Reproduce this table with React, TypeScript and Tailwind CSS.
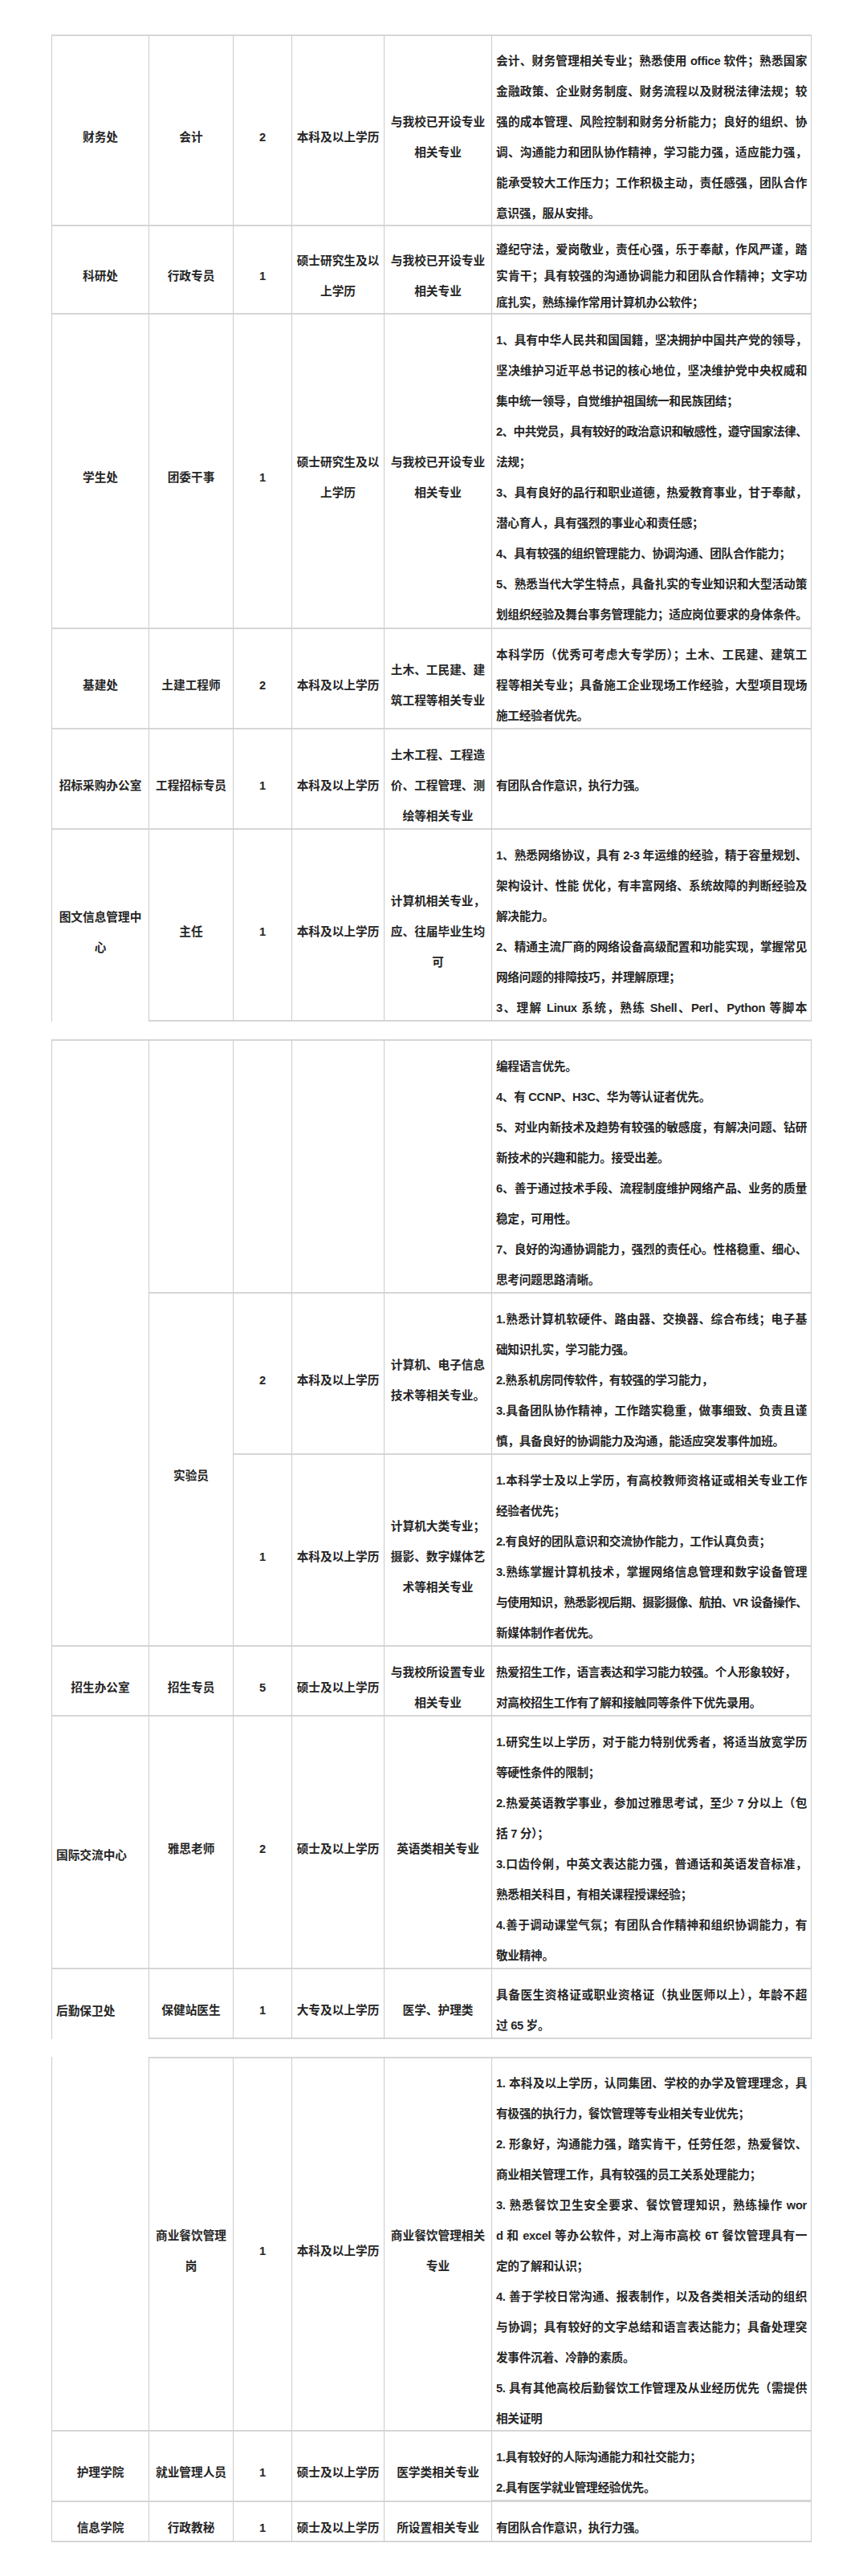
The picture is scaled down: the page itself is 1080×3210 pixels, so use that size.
import React from "react";
import clsx from "clsx";

const FONT = "font-[family-name:'Liberation_Sans','Noto_Sans_CJK_SC',sans-serif]";

type CProps = {
  t?: string[];
  edge?: boolean;
  top?: boolean;
  open?: boolean;
  left?: boolean;
  low?: boolean;
  span?: string;
};

// plain cell (department / post / count / degree / major)
function C({ t = [], edge, top, open, left, low, span }: CProps) {
  return (
    <div
      className={clsx(
        "flex items-center border-r border-[#cccccc] leading-[38px]",
        edge && "border-l",
        top && "border-t-2 border-t-[#d6d6d6]",
        !open && "border-b-2 border-b-[#d6d6d6]",
        left ? "justify-start pl-[5px]" : "justify-center px-1 text-center",
        low ? "pt-[32px]" : "pt-[16px]",
        span
      )}
    >
      <div>
        {t.map((s, i) => (
          <div key={i} className="whitespace-nowrap">
            {s}
          </div>
        ))}
      </div>
    </div>
  );
}

type DProps = {
  p: string[][];
  top?: boolean;
  lh?: string;
  cont?: boolean;
  thick?: boolean;
};

// requirement text, every wrapped line justified like the word doc
function D({ p, top, lh = "leading-[38px]", cont, thick }: DProps) {
  return (
    <div
      className={clsx(
        "flex items-center border-r border-[#cccccc] pl-[5px] pr-[5px] pt-[16px]",
        lh,
        top && "border-t-2 border-t-[#d6d6d6]",
        thick ? "border-b-[3px] border-b-[#d6d6d6]" : "border-b-2 border-b-[#d6d6d6]"
      )}
    >
      <div className="w-full">
        {p.map((para, i) =>
          para.map((s, j) => {
            const last = j === para.length - 1 && !(cont && i === p.length - 1);
            const tight = s.startsWith("~");
            return (
              <div
                key={`${i}-${j}`}
                className={clsx(
                  tight ? "tracking-[-0.8px]" : "tracking-[-0.3px]",
                  last ? "whitespace-nowrap" : "text-justify [text-align-last:justify]"
                )}
              >
                {tight ? s.slice(1) : s}
              </div>
            );
          })
        )}
      </div>
    </div>
  );
}

export default function App() {
  return (
    <div className={clsx("min-h-[3210px] bg-white pl-[64px] pt-[43px] text-[14.67px] font-bold text-[#262626]", FONT)}>
      <div className="flex w-[947px] flex-col gap-[22px]">
        {/* page 1 */}
        <div className="grid grid-cols-[122px_105px_73px_115px_134px_398px] grid-rows-[239px_110px_392px_125px_125px_239px]">
          <C edge top t={["财务处"]} />
          <C top t={["会计"]} />
          <C top t={["2"]} />
          <C top t={["本科及以上学历"]} />
          <C top t={["与我校已开设专业", "相关专业"]} />
          <D
            top
            p={[
              [
                "会计、财务管理相关专业；熟悉使用 office 软件；熟悉国家",
                "金融政策、企业财务制度、财务流程以及财税法律法规；较",
                "强的成本管理、风险控制和财务分析能力；良好的组织、协",
                "调、沟通能力和团队协作精神，学习能力强，适应能力强，",
                "能承受较大工作压力；工作积极主动，责任感强，团队合作",
                "意识强，服从安排。",
              ],
            ]}
          />

          <C edge t={["科研处"]} />
          <C t={["行政专员"]} />
          <C t={["1"]} />
          <C t={["硕士研究生及以", "上学历"]} />
          <C t={["与我校已开设专业", "相关专业"]} />
          <D
            lh="leading-[33px]"
            p={[
              [
                "遵纪守法，爱岗敬业，责任心强，乐于奉献，作风严谨，踏",
                "实肯干；具有较强的沟通协调能力和团队合作精神；文字功",
                "底扎实，熟练操作常用计算机办公软件；",
              ],
            ]}
          />

          <C edge t={["学生处"]} />
          <C t={["团委干事"]} />
          <C t={["1"]} />
          <C t={["硕士研究生及以", "上学历"]} />
          <C t={["与我校已开设专业", "相关专业"]} />
          <D
            p={[
              [
                "1、具有中华人民共和国国籍，坚决拥护中国共产党的领导，",
                "坚决维护习近平总书记的核心地位，坚决维护党中央权威和",
                "集中统一领导，自觉维护祖国统一和民族团结；",
              ],
              ["~2、中共党员，具有较好的政治意识和敏感性，遵守国家法律、", "法规；"],
              ["3、具有良好的品行和职业道德，热爱教育事业，甘于奉献，", "潜心育人，具有强烈的事业心和责任感；"],
              ["4、具有较强的组织管理能力、协调沟通、团队合作能力；"],
              ["5、熟悉当代大学生特点，具备扎实的专业知识和大型活动策", "划组织经验及舞台事务管理能力；适应岗位要求的身体条件。"],
            ]}
          />

          <C edge t={["基建处"]} />
          <C t={["土建工程师"]} />
          <C t={["2"]} />
          <C t={["本科及以上学历"]} />
          <C t={["土木、工民建、建", "筑工程等相关专业"]} />
          <D
            p={[
              [
                "本科学历（优秀可考虑大专学历）；土木、工民建、建筑工",
                "程等相关专业；具备施工企业现场工作经验，大型项目现场",
                "施工经验者优先。",
              ],
            ]}
          />

          <C edge t={["招标采购办公室"]} />
          <C t={["工程招标专员"]} />
          <C t={["1"]} />
          <C t={["本科及以上学历"]} />
          <C t={["土木工程、工程造", "价、工程管理、测", "绘等相关专业"]} />
          <D p={[["有团队合作意识，执行力强。"]]} />

          <C edge open t={["图文信息管理中", "心"]} />
          <C t={["主任"]} />
          <C t={["1"]} />
          <C t={["本科及以上学历"]} />
          <C t={["计算机相关专业，", "应、往届毕业生均", "可"]} />
          <D
            cont
            p={[
              [
                "1、熟悉网络协议，具有 2-3 年运维的经验，精于容量规划、",
                "架构设计、性能 优化，有丰富网络、系统故障的判断经验及",
                "解决能力。",
              ],
              ["2、精通主流厂商的网络设备高级配置和功能实现，掌握常见", "网络问题的排障技巧，并理解原理；"],
              ["3、理解 Linux 系统，熟练 Shell、Perl、Python 等脚本"],
            ]}
          />
        </div>

        {/* page 2 */}
        <div className="grid grid-cols-[122px_105px_73px_115px_134px_398px] grid-rows-[317px_201px_239px_87px_315px_87px]">
          <C edge top span="row-span-3" />
          <C top />
          <C top />
          <C top />
          <C top />
          <D
            top
            p={[
              ["编程语言优先。"],
              ["4、有 CCNP、H3C、华为等认证者优先。"],
              ["5、对业内新技术及趋势有较强的敏感度，有解决问题、钻研", "新技术的兴趣和能力。接受出差。"],
              ["6、善于通过技术手段、流程制度维护网络产品、业务的质量", "稳定，可用性。"],
              ["7、良好的沟通协调能力，强烈的责任心。性格稳重、细心、", "思考问题思路清晰。"],
            ]}
          />

          <C span="row-span-2" t={["实验员"]} />
          <C t={["2"]} />
          <C t={["本科及以上学历"]} />
          <C t={["计算机、电子信息", "技术等相关专业。"]} />
          <D
            p={[
              ["1.熟悉计算机软硬件、路由器、交换器、综合布线；电子基", "础知识扎实，学习能力强。"],
              ["2.熟系机房同传软件，有较强的学习能力，"],
              ["3.具备团队协作精神，工作踏实稳重，做事细致、负责且谨", "慎，具备良好的协调能力及沟通，能适应突发事件加班。"],
            ]}
          />

          <C t={["1"]} />
          <C t={["本科及以上学历"]} />
          <C t={["计算机大类专业；", "摄影、数字媒体艺", "术等相关专业"]} />
          <D
            p={[
              ["1.本科学士及以上学历，有高校教师资格证或相关专业工作", "经验者优先；"],
              ["2.有良好的团队意识和交流协作能力，工作认真负责；"],
              [
                "3.熟练掌握计算机技术，掌握网络信息管理和数字设备管理",
                "~与使用知识，熟悉影视后期、摄影摄像、航拍、VR 设备操作、",
                "新媒体制作者优先。",
              ],
            ]}
          />

          <C edge t={["招生办公室"]} />
          <C t={["招生专员"]} />
          <C t={["5"]} />
          <C t={["硕士及以上学历"]} />
          <C t={["与我校所设置专业", "相关专业"]} />
          <D p={[["热爱招生工作，语言表达和学习能力较强。个人形象较好，"], ["对高校招生工作有了解和接触同等条件下优先录用。"]]} />

          <C edge left low t={["国际交流中心"]} />
          <C t={["雅思老师"]} />
          <C t={["2"]} />
          <C t={["硕士及以上学历"]} />
          <C t={["英语类相关专业"]} />
          <D
            p={[
              ["1.研究生以上学历，对于能力特别优秀者，将适当放宽学历", "等硬性条件的限制；"],
              ["2.热爱英语教学事业，参加过雅思考试，至少 7 分以上（包", "括 7 分）；"],
              ["3.口齿伶俐，中英文表达能力强，普通话和英语发音标准，", "熟悉相关科目，有相关课程授课经验；"],
              ["4.善于调动课堂气氛；有团队合作精神和组织协调能力，有", "敬业精神。"],
            ]}
          />

          <C edge left open t={["后勤保卫处"]} />
          <C t={["保健站医生"]} />
          <C t={["1"]} />
          <C t={["大专及以上学历"]} />
          <C t={["医学、护理类"]} />
          <D p={[["具备医生资格证或职业资格证（执业医师以上），年龄不超", "过 65 岁。"]]} />
        </div>

        {/* page 3 */}
        <div className="grid grid-cols-[122px_105px_73px_115px_134px_398px] grid-rows-[467px_88px_50px]">
          <C edge />
          <C top t={["商业餐饮管理", "岗"]} />
          <C top t={["1"]} />
          <C top t={["本科及以上学历"]} />
          <C top t={["商业餐饮管理相关", "专业"]} />
          <D
            top
            p={[
              ["1. 本科及以上学历，认同集团、学校的办学及管理理念，具", "有极强的执行力，餐饮管理等专业相关专业优先；"],
              ["2. 形象好，沟通能力强，踏实肯干，任劳任怨，热爱餐饮、", "商业相关管理工作，具有较强的员工关系处理能力；"],
              [
                "3. 熟悉餐饮卫生安全要求、餐饮管理知识，熟练操作 wor",
                "d 和 excel 等办公软件，对上海市高校 6T 餐饮管理具有一",
                "定的了解和认识；",
              ],
              [
                "4. 善于学校日常沟通、报表制作，以及各类相关活动的组织",
                "与协调；具有较好的文字总结和语言表达能力；具备处理突",
                "发事件沉着、冷静的素质。",
              ],
              ["5. 具有其他高校后勤餐饮工作管理及从业经历优先（需提供", "相关证明"],
            ]}
          />

          <C edge t={["护理学院"]} />
          <C t={["就业管理人员"]} />
          <C t={["1"]} />
          <C t={["硕士及以上学历"]} />
          <C t={["医学类相关专业"]} />
          <D thick p={[["1.具有较好的人际沟通能力和社交能力；"], ["2.具有医学就业管理经验优先。"]]} />

          <C edge t={["信息学院"]} />
          <C t={["行政教秘"]} />
          <C t={["1"]} />
          <C t={["硕士及以上学历"]} />
          <C t={["所设置相关专业"]} />
          <D p={[["有团队合作意识，执行力强。"]]} />
        </div>
      </div>
    </div>
  );
}
